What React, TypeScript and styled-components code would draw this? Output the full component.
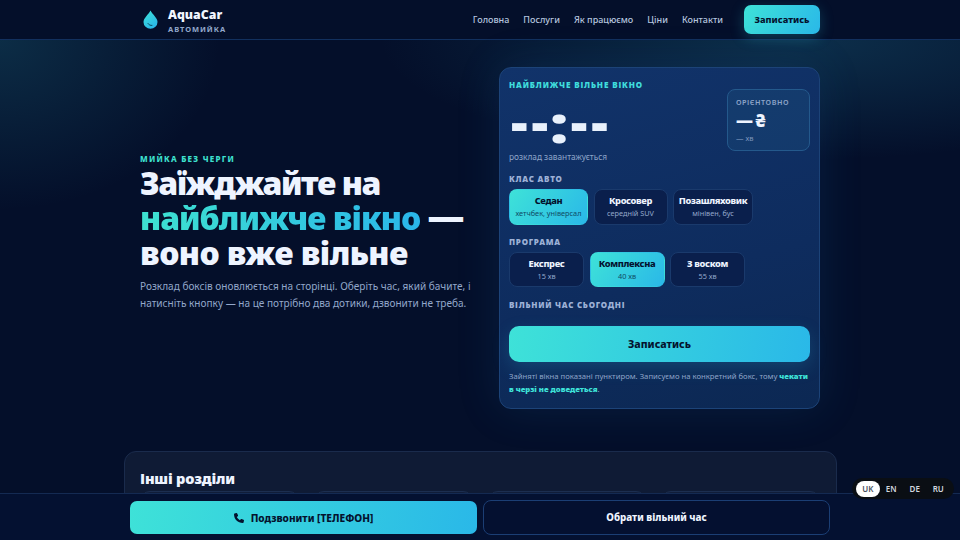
import React from "react";
import styled, { createGlobalStyle } from "styled-components";
import { FaPhone } from "react-icons/fa6";

const GlobalStyle = createGlobalStyle`
  html, body {
    margin: 0;
    height: 540px;
    overflow: hidden;
    background: #040f2a;
    font-family: "Noto Sans", "Liberation Sans", sans-serif;
    color: #eef4ff;
  }
  * { box-sizing: border-box; }
`;

const Page = styled.div`
  position: relative;
  width: 960px;
  height: 540px;
  overflow: hidden;
  background:
    radial-gradient(420px 120px at 800px 40px, rgba(34, 130, 160, 0.28), transparent 100%),
    radial-gradient(220px 170px at 0px 40px, rgba(34, 130, 150, 0.26), transparent 100%),
    #040f2a;
`;

const Header = styled.header`
  height: 40px;
  padding: 0 140px;
  display: flex;
  align-items: center;
  justify-content: space-between;
  background: #040f2a;
  border-bottom: 1px solid #12305e;
`;

const Brand = styled.div`
  display: flex;
  align-items: center;
  gap: 10px;
  padding-left: 3px;
`;

const BrandText = styled.div`
  display: flex;
  flex-direction: column;
  padding-top: 3px;
`;

const BrandName = styled.span`
  font-size: 12.3px;
  line-height: 15px;
  font-weight: 900;
  color: #f2f6ff;
`;

const BrandSub = styled.span`
  font-size: 7.5px;
  line-height: 14px;
  font-weight: 700;
  letter-spacing: 0.95px;
  color: #93a8cb;
`;

const Nav = styled.nav`
  display: flex;
  align-items: center;
  gap: 14px;
`;

const NavLink = styled.a`
  font-size: 9px;
  font-weight: 500;
  color: #b5c5df;
`;

const HeaderCta = styled.button`
  width: 76px;
  height: 29px;
  margin: 0 0 0 7px;
  border: 0;
  border-radius: 7px;
  font: 800 9.2px "Noto Sans", sans-serif;
  color: #04122e;
  background: linear-gradient(120deg, #3ee2d8, #2ab8e8);
  box-shadow: 0 4px 14px rgba(46, 200, 225, 0.25);
`;

const Hero = styled.main`
  display: grid;
  grid-template-columns: 1fr 321px;
  gap: 19px;
  padding: 27px 140px 0;
  align-items: center;
`;

const HeroCopy = styled.div`
  padding-bottom: 11px;
`;

const Eyebrow = styled.div`
  font-size: 8px;
  line-height: 12px;
  font-weight: 800;
  letter-spacing: 1.25px;
  color: #3ee2d0;
`;

const Title = styled.h1`
  margin: 0;
  font-size: 32px;
  line-height: 35px;
  font-weight: 900;
  color: #eef4ff;
  white-space: nowrap;
`;

const TitleLine = styled.span<{ $track: number }>`
  display: block;
  letter-spacing: ${(p) => p.$track}px;
`;

const Accent = styled.span`
  letter-spacing: -1px;
  background: linear-gradient(90deg, #3ee2d0, #2ab6ea);
  -webkit-background-clip: text;
  background-clip: text;
  color: transparent;
`;

const TitleDash = styled.span`
  font-size: 37px;
  line-height: 0;
`;

const Lead = styled.p`
  margin: 8px 0 0;
  font-size: 10.05px;
  line-height: 17px;
  color: #93a8cb;
  white-space: nowrap;
`;

const Panel = styled.section`
  height: 342px;
  padding: 11px 9px 0;
  border: 1px solid #1c4378;
  border-radius: 12px;
  background: linear-gradient(165deg, #11336a 0%, #0e2c5e 60%, #0c2853 100%);
  box-shadow: 0 0 44px rgba(30, 110, 180, 0.16);
`;

const PanelTop = styled.div`
  display: flex;
  justify-content: space-between;
  align-items: flex-start;
`;

const WindowLabel = styled.div`
  font-size: 8px;
  line-height: 12px;
  font-weight: 900;
  letter-spacing: 0.85px;
  color: #3fdcdc;
`;

const Clock = styled.div`
  height: 46px;
  margin-top: 7px;
  padding-left: 2px;
  font-size: 52px;
  line-height: 46px;
  font-weight: 900;
  letter-spacing: 3.9px;
  color: #e9f1fc;
  white-space: nowrap;
`;

const ClockColon = styled.span`
  display: inline-block;
  transform: translateY(2.5px) scale(1.25, 0.95);
`;

const ClockNote = styled.div`
  margin-top: 7px;
  font-size: 8.3px;
  line-height: 12px;
  color: #8ea5c9;
`;

const EstimateCard = styled.div`
  width: 83px;
  height: 62px;
  margin: 10px 0 0;
  padding: 7px 8px;
  border: 1px solid #24598c;
  border-radius: 8px;
  background: rgba(36, 100, 140, 0.22);
`;

const EstimateLabel = styled.div`
  font-size: 7.2px;
  line-height: 11px;
  font-weight: 600;
  letter-spacing: 0.55px;
  color: #8ea5c9;
`;

const EstimatePrice = styled.div`
  font-size: 17px;
  line-height: 24px;
  margin-top: 1px;
  font-weight: 900;
  word-spacing: -2px;
  color: #eef4ff;
`;

const EstimateTime = styled.div`
  font-size: 7.5px;
  line-height: 12px;
  margin-top: -1px;
  color: #7f97bd;
`;

const GroupLabel = styled.div<{ $top: number }>`
  margin-top: ${(p) => p.$top}px;
  font-size: 8px;
  line-height: 11px;
  font-weight: 900;
  letter-spacing: 0.75px;
  color: #9db1d6;
`;

const OptionRow = styled.div`
  display: flex;
  gap: 5.5px;
  margin-top: 5px;
`;

const Option = styled.div<{ $active?: boolean; $w: number }>`
  width: ${(p) => p.$w}px;
  height: 35.5px;
  display: flex;
  flex-direction: column;
  align-items: center;
  justify-content: center;
  border-radius: 8px;
  border: 1px solid ${(p) => (p.$active ? "transparent" : "#1a3a6c")};
  background: ${(p) =>
    p.$active ? "linear-gradient(125deg, #3ee2d8, #2ab8e8)" : "#0a1f4c"};
  color: ${(p) => (p.$active ? "#04122e" : "#eef4ff")};
`;

const OptionName = styled.span`
  font-size: 9.3px;
  line-height: 13px;
  font-weight: 800;
  letter-spacing: -0.35px;
`;

const OptionHint = styled.span<{ $active?: boolean }>`
  font-size: 7.3px;
  line-height: 12px;
  color: ${(p) => (p.$active ? "#0f4a66" : "#93a8cb")};
`;

const BookButton = styled.button`
  display: block;
  width: 100%;
  height: 36px;
  margin-top: 16px;
  border: 0;
  border-radius: 10px;
  font: 800 10.5px "Noto Sans", sans-serif;
  color: #04122e;
  background: linear-gradient(100deg, #3ee2d8, #2ab8e8);
  box-shadow: 0 6px 18px rgba(46, 190, 225, 0.18);
`;

const Note = styled.p`
  margin: 8px 0 0;
  font-size: 7.7px;
  line-height: 13px;
  color: #8ea5c9;
  strong {
    font-weight: 900;
    color: #3ee2d8;
  }
`;

const MoreSection = styled.section`
  width: 713px;
  height: 160px;
  margin: 42px 0 0 123.5px;
  padding: 17px 15.5px;
  border: 1px solid #1a2b4c;
  border-radius: 12px;
  background: #0f1b35;
`;

const MoreTitle = styled.h2`
  margin: 0;
  font-size: 14.6px;
  line-height: 19px;
  font-weight: 900;
  letter-spacing: -0.2px;
  color: #eef4ff;
`;

const TileGrid = styled.div`
  display: grid;
  grid-template-columns: repeat(4, 1fr);
  gap: 15px;
  margin-top: 3px;
`;

const Tile = styled.div`
  height: 60px;
  border: 1px solid #1c2e50;
  border-radius: 10px;
  background: #101d39;
`;

const BottomBar = styled.div`
  position: absolute;
  left: 0;
  right: 0;
  bottom: 0;
  height: 47px;
  padding: 7px 130px 0;
  display: grid;
  grid-template-columns: 1fr 1fr;
  gap: 6px;
  border-top: 1px solid #142a52;
  background: #041131;
`;

const CallButton = styled.button`
  height: 33px;
  border: 0;
  border-radius: 7px;
  display: flex;
  align-items: center;
  justify-content: center;
  gap: 7px;
  font: 800 10.1px "Noto Sans", sans-serif;
  color: #04122e;
  background: linear-gradient(100deg, #3ee2d8, #2ab8e8);
`;

const PickButton = styled.button`
  height: 35px;
  margin-top: -1px;
  border: 1px solid #1b3e74;
  border-radius: 8px;
  font: 800 9.75px "Noto Sans", sans-serif;
  color: #eef4ff;
  background: #041030;
`;

const LangSwitch = styled.div`
  position: absolute;
  left: 852px;
  top: 478px;
  height: 21px;
  padding: 2px 4px;
  display: flex;
  align-items: center;
  border-radius: 11px;
  background: #0a0e14;
`;

const Lang = styled.span<{ $active?: boolean }>`
  width: 23.5px;
  height: 16px;
  display: flex;
  align-items: center;
  justify-content: center;
  border-radius: 8px;
  font-size: 8px;
  font-weight: 600;
  background: ${(p) => (p.$active ? "#ffffff" : "transparent")};
  color: ${(p) => (p.$active ? "#4a5160" : "#d2d7df")};
`;

const classes = [
  { name: "Седан", hint: "хетчбек, універсал", w: 79, active: true },
  { name: "Кросовер", hint: "середній SUV", w: 74 },
  { name: "Позашляховик", hint: "мінівен, бус", w: 80 },
];

const programs = [
  { name: "Експрес", hint: "15 хв", w: 75 },
  { name: "Комплексна", hint: "40 хв", w: 75, active: true },
  { name: "З воском", hint: "55 хв", w: 75 },
];

function Drop() {
  return (
    <svg width="15" height="19" viewBox="0 0 15 19">
      <defs>
        <linearGradient id="drop" x1="0" y1="0" x2="0.6" y2="1">
          <stop offset="0" stopColor="#3ee2d8" />
          <stop offset="1" stopColor="#2ab8e8" />
        </linearGradient>
      </defs>
      <path d="M7.5 0.5 C9.5 4.5 14.5 8 14.5 12 A7 6.8 0 0 1 0.5 12 C0.5 8 5.5 4.5 7.5 0.5 Z" fill="url(#drop)" />
      <path d="M5 13.5 C6 15 7.5 15.6 9 15.4" fill="none" stroke="#0a4a60" strokeWidth="1" strokeLinecap="round" />
    </svg>
  );
}

export default function App() {
  return (
    <Page>
      <GlobalStyle />
      <Header>
        <Brand>
          <Drop />
          <BrandText>
            <BrandName>AquaCar</BrandName>
            <BrandSub>АВТОМИЙКА</BrandSub>
          </BrandText>
        </Brand>
        <Nav>
          <NavLink>Головна</NavLink>
          <NavLink>Послуги</NavLink>
          <NavLink>Як працюємо</NavLink>
          <NavLink>Ціни</NavLink>
          <NavLink>Контакти</NavLink>
          <HeaderCta>Записатись</HeaderCta>
        </Nav>
      </Header>

      <Hero>
        <HeroCopy>
          <Eyebrow>МИЙКА БЕЗ ЧЕРГИ</Eyebrow>
          <Title>
            <TitleLine $track={-1.45}>Заїжджайте на</TitleLine>
            <TitleLine $track={-1}>
              <Accent>найближче вікно</Accent> <TitleDash>—</TitleDash>
            </TitleLine>
            <TitleLine $track={-0.58}>воно вже вільне</TitleLine>
          </Title>
          <Lead>
            Розклад боксів оновлюється на сторінці. Оберіть час, який бачите, і
            <br />
            натисніть кнопку — на це потрібно два дотики, дзвонити не треба.
          </Lead>
        </HeroCopy>

        <Panel>
          <PanelTop>
            <div>
              <WindowLabel>НАЙБЛИЖЧЕ ВІЛЬНЕ ВІКНО</WindowLabel>
              <Clock>
                --<ClockColon>:</ClockColon>--
              </Clock>
              <ClockNote>розклад завантажується</ClockNote>
            </div>
            <EstimateCard>
              <EstimateLabel>ОРІЄНТОВНО</EstimateLabel>
              <EstimatePrice>— ₴</EstimatePrice>
              <EstimateTime>— хв</EstimateTime>
            </EstimateCard>
          </PanelTop>

          <GroupLabel $top={10}>КЛАС АВТО</GroupLabel>
          <OptionRow>
            {classes.map((c) => (
              <Option key={c.name} $w={c.w} $active={c.active}>
                <OptionName>{c.name}</OptionName>
                <OptionHint $active={c.active}>{c.hint}</OptionHint>
              </Option>
            ))}
          </OptionRow>

          <GroupLabel $top={11}>ПРОГРАМА</GroupLabel>
          <OptionRow>
            {programs.map((c) => (
              <Option key={c.name} $w={c.w} $active={c.active}>
                <OptionName>{c.name}</OptionName>
                <OptionHint $active={c.active}>{c.hint}</OptionHint>
              </Option>
            ))}
          </OptionRow>

          <GroupLabel $top={12}>ВІЛЬНИЙ ЧАС СЬОГОДНІ</GroupLabel>
          <BookButton>Записатись</BookButton>
          <Note>
            Зайняті вікна показані пунктиром. Записуємо на конкретний бокс, тому{" "}
            <strong>чекати в черзі не доведеться</strong>.
          </Note>
        </Panel>
      </Hero>

      <MoreSection>
        <MoreTitle>Інші розділи</MoreTitle>
        <TileGrid>
          <Tile />
          <Tile />
          <Tile />
          <Tile />
        </TileGrid>
      </MoreSection>

      <BottomBar>
        <CallButton>
          <FaPhone size={10} />
          Подзвонити [ТЕЛЕФОН]
        </CallButton>
        <PickButton>Обрати вільний час</PickButton>
      </BottomBar>

      <LangSwitch>
        <Lang $active>UK</Lang>
        <Lang>EN</Lang>
        <Lang>DE</Lang>
        <Lang>RU</Lang>
      </LangSwitch>
    </Page>
  );
}
